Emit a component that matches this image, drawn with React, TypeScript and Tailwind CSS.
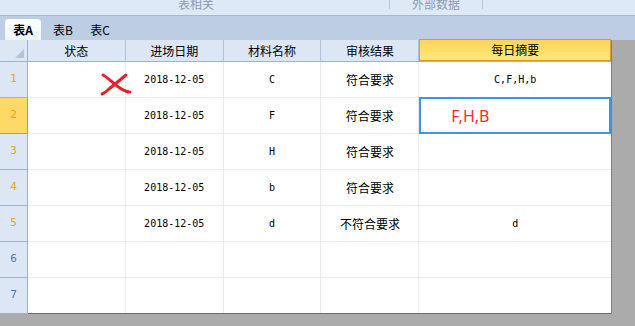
import React from "react";

const rows = [
  { n: 1, date: "2018-12-05", mat: "C", res: "符合要求", sum: "C,F,H,b", mark: true },
  { n: 2, date: "2018-12-05", mat: "F", res: "符合要求", sum: "", selected: true },
  { n: 3, date: "2018-12-05", mat: "H", res: "符合要求", sum: "" },
  { n: 4, date: "2018-12-05", mat: "b", res: "符合要求", sum: "" },
  { n: 5, date: "2018-12-05", mat: "d", res: "不符合要求", sum: "d" },
  { n: 6, date: "", mat: "", res: "", sum: "" },
  { n: 7, date: "", mat: "", res: "", sum: "" },
];

const cjk = "font-['Noto_Sans_CJK_SC',sans-serif]";
const mono = "font-['DejaVu_Sans_Mono','Noto_Sans_CJK_SC',monospace]";

function RedCross() {
  return (
    <svg width="34" height="26" viewBox="0 0 34 26" className="absolute left-[71px] top-[9px]">
      <path d="M4 4 C8 6 14 12 18 15 C22 18 26 21 31 21" stroke="#e8202a" strokeWidth="3" fill="none" strokeLinecap="round" />
      <path d="M27 4 C22 8 15 14 10 18 C8 20 6 22 3 23" stroke="#e8202a" strokeWidth="3" fill="none" strokeLinecap="round" />
    </svg>
  );
}

export default function App() {
  return (
    <div className="w-[635px] h-[326px] overflow-hidden bg-[#ababab] relative">
      {/* ribbon group labels */}
      <div className="h-[16px] bg-[#dfe9f5] border-b border-[#a7b8ce] relative overflow-hidden">
        <span className={`absolute left-[178px] top-[-4px] text-[12px] leading-[16px] text-[#8c9ab0] ${cjk}`}>表相关</span>
        <span className="absolute left-[389px] top-0 w-px h-[9px] bg-[#b4c3d6]" />
        <span className={`absolute left-[412px] top-[-4px] text-[12px] leading-[16px] text-[#8c9ab0] ${cjk}`}>外部数据</span>
        <span className="absolute left-[482px] top-0 w-px h-[9px] bg-[#b4c3d6]" />
      </div>

      {/* sheet tabs */}
      <div className="h-[24px] bg-[#bccde4] flex items-end pl-[5px] gap-[7px]">
        <div className={`h-[21px] w-[36px] rounded-t-[4px] bg-gradient-to-b from-[#ffffff] to-[#eef4fb] flex items-center justify-center text-[12px] font-bold text-black ${cjk}`}>
          表A
        </div>
        <div className={`h-[21px] w-[30px] flex items-center justify-center text-[12px] text-black ${cjk}`}>表B</div>
        <div className={`h-[21px] w-[30px] flex items-center justify-center text-[12px] text-black ${cjk}`}>表C</div>
      </div>

      <div className="flex">
        <div className="w-[612px] border-r border-[#7f7f7f] bg-white">
          {/* header row */}
          <div className="flex h-[22px] border-b border-[#9db3cc] bg-[#dce6f4]">
            <div className="w-[28px] border-r border-[#9db3cc] relative">
              <span className="absolute right-[3px] bottom-[3px] w-0 h-0 border-l-[9px] border-l-transparent border-b-[9px] border-b-[#b6c3d3]" />
            </div>
            {["状态", "进场日期", "材料名称", "审核结果"].map((h) => (
              <div key={h} className={`w-[98px] border-r border-[#b0c2d8] flex items-center justify-center text-[12px] text-black ${cjk}`}>
                {h}
              </div>
            ))}
            <div className={`w-[192px] -mt-px h-[22px] border border-[#d79b30] bg-gradient-to-b from-[#ffd458] to-[#fde97a] flex items-center justify-center text-[12px] text-black ${cjk}`}>
              每日摘要
            </div>
          </div>

          {rows.map((r) => (
            <div key={r.n} className={`flex h-[36px] border-b ${r.n === 7 ? "border-[#6e6e6e]" : "border-[#ececec]"}`}>
              <div
                className={`w-[28px] -mb-px border-r border-b flex items-center justify-center text-[11px] ${mono} ${
                  r.selected ? "bg-[#ffd966] border-[#cf9a35]" : "bg-[#dce6f4] border-[#9db3cc]"
                } ${r.n <= 5 ? "text-[#f3a200]" : "text-[#3f7ab8]"}`}
              >
                {r.n}
              </div>
              <div className="w-[98px] border-r border-[#ececec] relative">{r.mark && <RedCross />}</div>
              <div className={`w-[98px] border-r border-[#ececec] flex items-center justify-center text-[10px] text-black ${mono}`}>{r.date}</div>
              <div className={`w-[98px] border-r border-[#ececec] flex items-center justify-center text-[10px] text-black ${mono}`}>{r.mat}</div>
              <div className={`w-[98px] border-r border-[#ececec] flex items-center justify-center text-[12px] text-black ${cjk}`}>{r.res}</div>
              {r.selected ? (
                <div className="w-[192px] -mt-px h-[37px] border-2 border-[#3d95e8] flex items-center pl-[30px] text-[16px] text-[#ff2a2a] font-['Noto_Sans',sans-serif]">
                  F,H,B
                </div>
              ) : (
                <div className={`w-[192px] flex items-center justify-center text-[10px] text-black ${mono}`}>{r.sum}</div>
              )}
            </div>
          ))}
        </div>
      </div>
    </div>
  );
}
